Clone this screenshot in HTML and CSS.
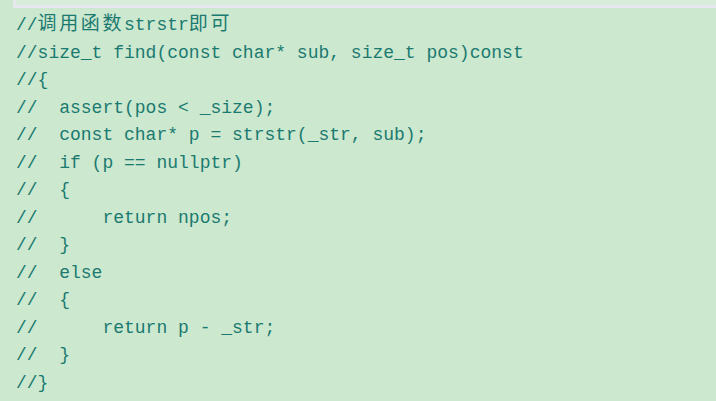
FILE: index.html
```html
<!DOCTYPE html>
<html lang="zh">
<head>
<meta charset="utf-8">
<link rel="stylesheet" href="styles.css">
</head>
<body>
<div class="prev-block"></div>
<pre class="code">//<span class="cjk">调用函数</span>strstr<span class="cjk">即可</span>
//size_t find(const char* sub, size_t pos)const
//{
//  assert(pos &lt; _size);
//  const char* p = strstr(_str, sub);
//  if (p == nullptr)
//  {
//      return npos;
//  }
//  else
//  {
//      return p - _str;
//  }
//}</pre>
</body>
</html>
```
FILE: styles.css
```css
html, body {
  margin: 0;
  padding: 0;
  background: #cce8cf;
}
.prev-block {
  margin-left: 13px;
  height: 5px;
  border-left: 3px solid #e7e7ef;
  border-bottom: 3px solid #e7e7ef;
  background: #d9eddb;
}
.code {
  margin: 0;
  padding: 0 0 0 16px;
  font-family: "Liberation Mono", monospace;
  font-size: 18px;
  line-height: 27.5px;
  color: #1b7a6f;
}
.cjk {
  font-family: "Noto Sans CJK SC", sans-serif;
  font-size: 19px;
  letter-spacing: 2.6px;
}
```
